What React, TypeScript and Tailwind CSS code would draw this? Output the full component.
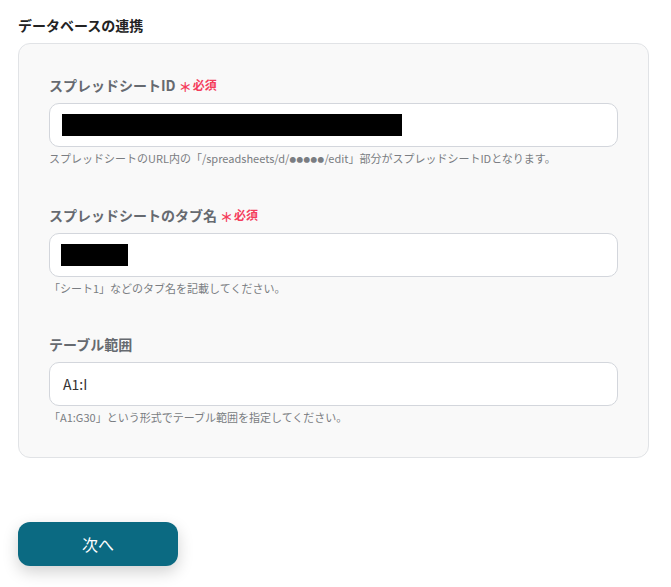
import React from "react";

const font = { fontFamily: '"Noto Sans CJK JP", "Noto Sans", sans-serif' };

function Label({ text, required }: { text: string; required?: boolean }) {
  return (
    <div className="flex items-center h-[20px]">
      <span className="text-[14px] font-bold text-[#666a70] leading-[20px]">{text}</span>
      {required && (
        <span className="ml-[3px] flex items-center text-[#f43d5c] font-bold leading-[20px]">
          <span className="text-[13px] font-bold mt-[3px]">＊</span>
          <span className="text-[12px] ml-[1px]">必須</span>
        </span>
      )}
    </div>
  );
}

function Field({
  label,
  required,
  children,
  help,
}: {
  label: string;
  required?: boolean;
  children: React.ReactNode;
  help: React.ReactNode;
}) {
  return (
    <div className="flex flex-col">
      <Label text={label} required={required} />
      <div className="mt-[8px] h-[44px] rounded-[10px] border border-[#d3d6dc] bg-white flex items-center px-[12px]">
        {children}
      </div>
      <div className="mt-[3px] text-[11px] leading-[16px] text-[#7a7d82]">{help}</div>
    </div>
  );
}

export default function App() {
  return (
    <div className="w-[671px] h-[587px] bg-white px-[18px] pt-[15px]" style={font}>
      <div className="text-[14px] font-bold leading-[20px] text-[#222]">データベースの連携</div>
      <div className="mt-[8px] w-[631px] rounded-[12px] border border-[#e1e3e6] bg-[#f9f9f9] px-[30px] pt-[31px] pb-[32px] flex flex-col gap-[38px]">
        <Field
          label="スプレッドシートID"
          required
          help={
            <>
              スプレッドシートのURL内の「/spreadsheets/d/
              <span className="text-[6.5px] tracking-[0.5px] align-[1px]">●●●●●</span>
              /edit」部分がスプレッドシートIDとなります。
            </>
          }
        >
          <div className="w-[340px] h-[22px] bg-black" />
        </Field>
        <Field
          label="スプレッドシートのタブ名"
          required
          help="「シート1」などのタブ名を記載してください。"
        >
          <div className="w-[67px] h-[22px] bg-black -ml-[1px]" />
        </Field>
        <Field label="テーブル範囲" help="「A1:G30」という形式でテーブル範囲を指定してください。">
          <span className="text-[14px] text-[#333] pl-[1px]">A1:I</span>
        </Field>
      </div>
      <button className="mt-[64px] w-[160px] h-[44px] rounded-[12px] bg-[#0b6a82] text-white text-[16px] shadow-[0_6px_16px_rgba(0,0,0,0.18)] flex items-center justify-center">
        次へ
      </button>
    </div>
  );
}
